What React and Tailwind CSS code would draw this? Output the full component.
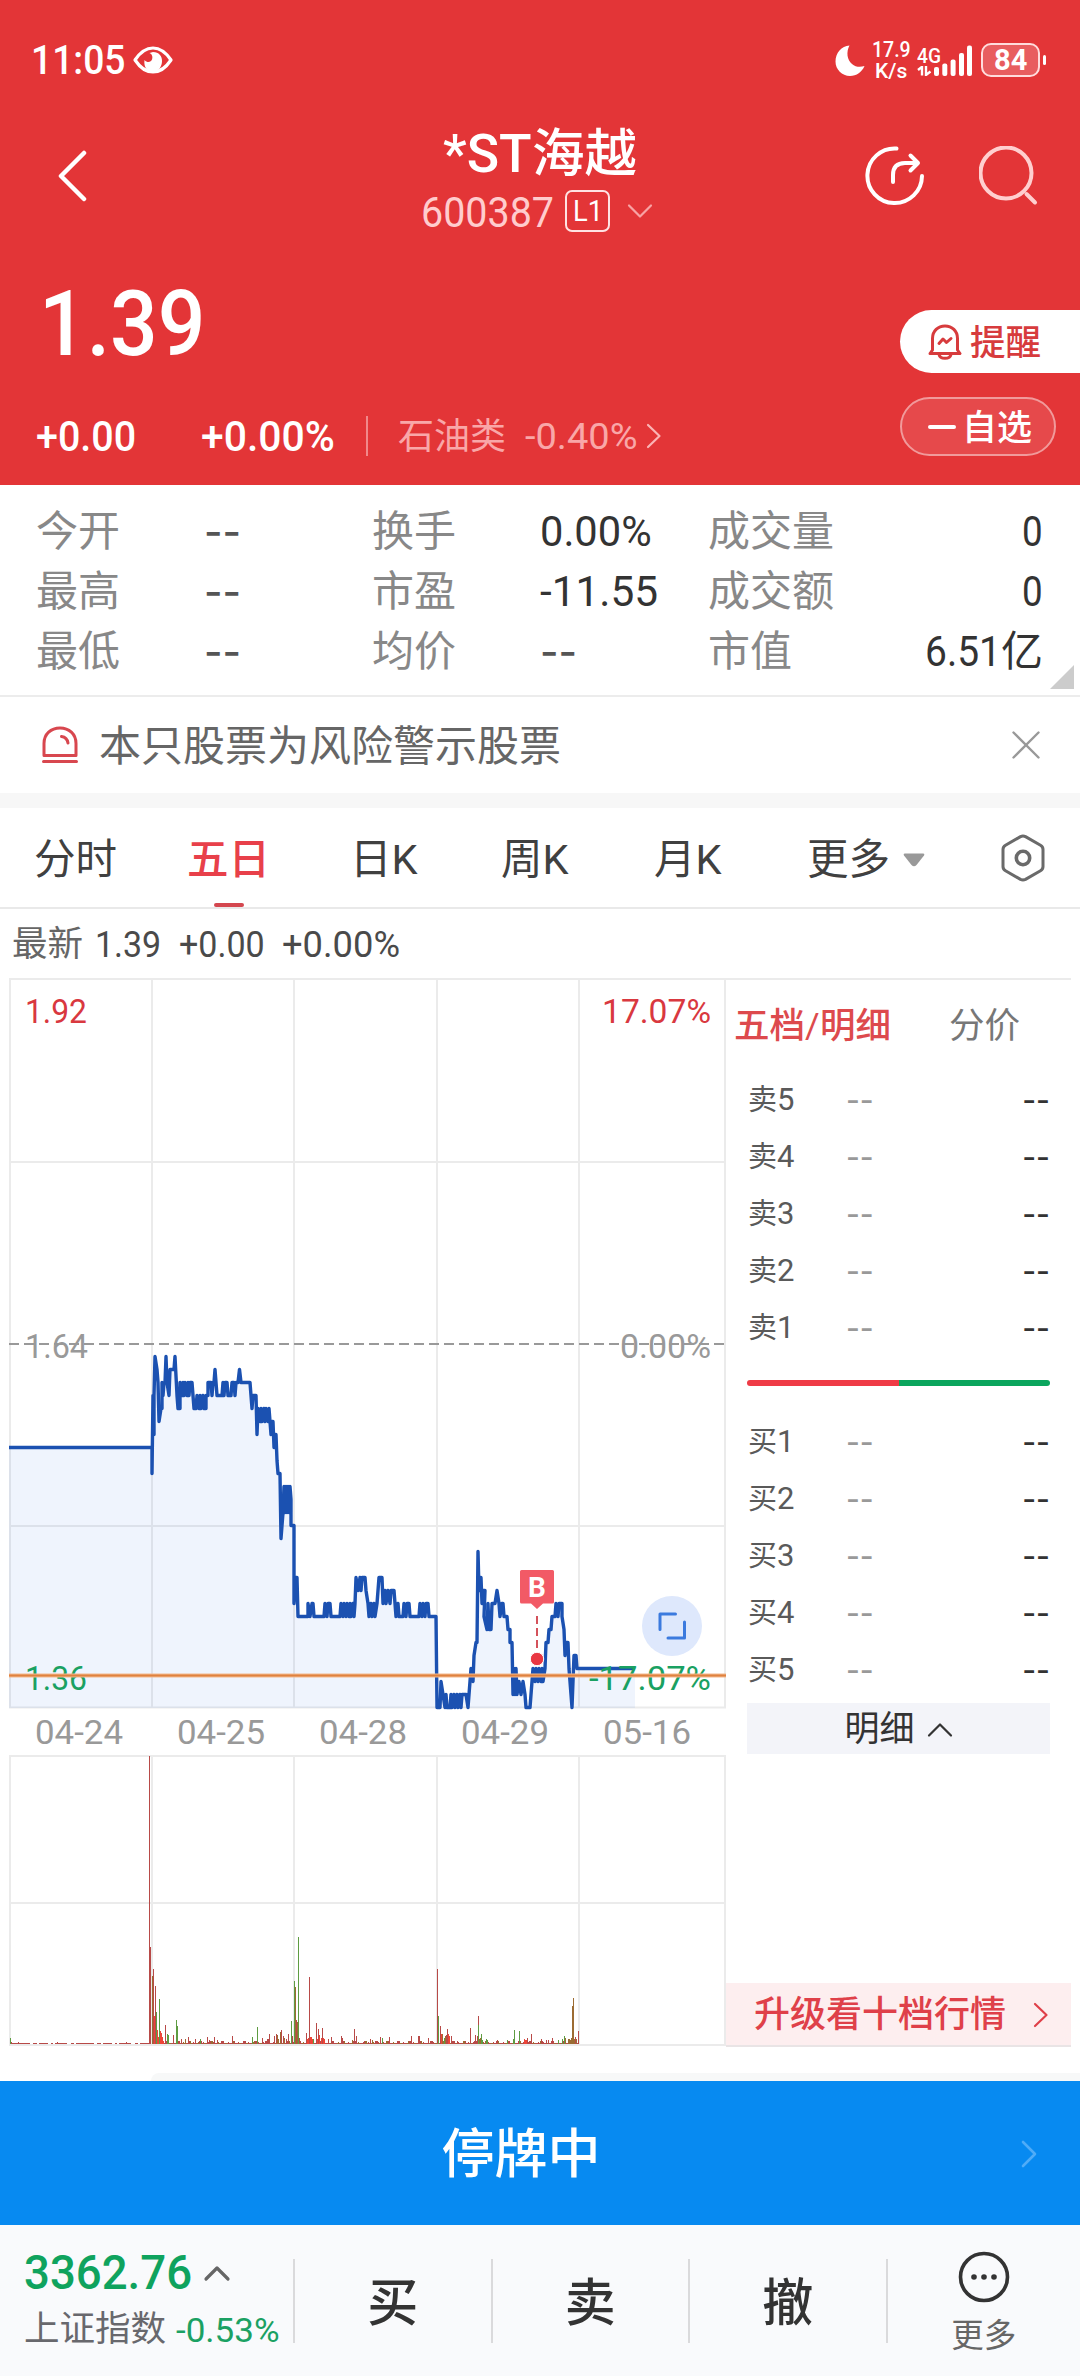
import React, { useLayoutEffect, useRef, useState } from "react";

// Narrow figures: squeezes (or stretches) a run of text to the given width.
const Num = ({ w, children, className = "" }) => {
  const ref = useRef(null);
  const [scale, setScale] = useState(1);

  useLayoutEffect(() => {
    if (ref.current?.offsetWidth) setScale(w / ref.current.offsetWidth);
  }, [w, children]);

  return (
    <span className={`inline-block shrink-0 leading-none ${className}`} style={{ width: w }}>
      <span ref={ref} className="inline-block origin-left whitespace-nowrap" style={{ transform: `scaleX(${scale})` }}>
        {children}
      </span>
    </span>
  );
};

const Chevron = ({ d, w, h, stroke = 3, className = "" }) => (
  <svg width={w} height={h} viewBox={`0 0 ${w} ${h}`} className={`shrink-0 ${className}`} fill="none" stroke="currentColor" strokeWidth={stroke} strokeLinecap="round" strokeLinejoin="round">
    <path d={d} />
  </svg>
);

const stats = [
  ["今开", "--", "换手", "0.00%", 112, "成交量", "0", 21],
  ["最高", "--", "市盈", "-11.55", 118, "成交额", "0", 21],
  ["最低", "--", "均价", "--", 0, "市值", "6.51", 76],
];

const days = ["04-24", "04-25", "04-28", "04-29", "05-16"];
const gridX = [10, 152, 294, 437, 579, 725];

// [x, price in cents]
const priceBlocks = [
  [9, 156], [152, 156], [152, 154], [153, 160], [154, 157], [154, 160], [155, 163], [157, 162], [158, 161], [159, 158], [161, 159], [162, 159],
  [162, 161], [163, 160], [164, 161], [165, 161], [166, 163], [167, 161], [169, 160], [170, 162], [174, 162], [175, 163], [177, 160], [178, 159],
  [180, 159], [180, 161], [182, 160], [183, 161], [184, 160], [185, 161], [187, 160], [188, 161], [189, 160], [190, 161], [192, 161], [193, 160],
  [194, 159], [196, 159], [197, 160], [199, 159], [200, 160], [201, 159], [203, 160], [204, 159], [206, 159], [206, 160], [208, 160], [208, 161],
  [211, 161], [212, 160], [213, 161], [214, 161], [215, 162], [217, 160], [222, 160], [223, 161], [224, 160], [225, 161], [227, 161], [228, 160],
  [231, 160], [232, 161], [234, 161], [235, 160], [236, 161], [238, 161], [239.5, 162], [241, 161], [250, 161], [251, 160], [252, 159], [253, 160],
  [256, 160], [257, 157], [258, 159], [260, 158], [261, 159], [262, 158], [264, 159], [265, 158], [266, 159], [268, 158], [269, 159], [270, 158],
  [271, 157], [272, 158], [273, 158], [274, 156], [275, 157], [276, 157], [277, 155], [278, 154], [280, 154], [281, 149], [283, 151], [284, 153],
  [285, 151], [286, 153], [287, 151], [288, 153], [289, 151], [290, 153], [291, 152], [291, 150], [294, 150], [294, 144], [296, 146], [297, 146],
  [298, 143], [308, 143], [308, 144], [310, 143], [312, 144], [313, 144], [314, 143], [324, 143], [325, 144], [327, 143], [328, 144], [330, 144],
  [331, 143], [340, 143], [341, 144], [343, 143], [344, 144], [346, 143], [347, 144], [349, 143], [350, 144], [351, 143], [353, 144], [354, 143],
  [355, 144], [356, 146], [358, 145], [360, 146], [361, 145], [362, 146], [365, 146], [366, 145], [368, 144], [369, 143], [371, 144], [372, 143],
  [374, 144], [375, 143], [377, 144], [378, 145], [379, 146], [382, 146], [383, 144], [385, 145], [386, 144], [388, 145], [390, 144], [391, 145],
  [394, 145], [396, 143], [398, 144], [399, 143], [403, 143], [404, 144], [406, 143], [407, 144], [409, 144], [410, 143], [419, 143], [420, 144],
  [422, 143], [423, 144], [425, 143], [426, 144], [428, 144], [429, 143], [436, 143], [437, 136], [440, 136], [441, 138], [443, 137], [445, 136],
  [446, 137], [447, 136], [450, 136], [451, 137], [452, 136], [454, 137], [455, 136], [457, 137], [458, 136], [460, 137], [461, 136], [462, 137],
  [466, 137], [468, 136], [469, 137], [471, 139], [473, 138], [474, 140], [476, 141], [477, 141], [478, 148], [479, 145], [480, 146], [481, 146],
  [482, 144], [483, 145], [485, 145], [484, 143], [487, 142], [488, 144], [489, 142], [491, 142], [492, 144], [495, 144], [497, 145], [499, 144],
  [500, 143], [502, 144], [503, 144], [504, 143], [507, 143], [508, 142], [510, 142], [510, 141], [512, 141], [513, 137], [514, 139], [515, 137],
  [516, 139], [517, 137], [519, 138], [521, 137], [523, 138], [525, 137], [526, 136], [530, 136], [532, 138], [533, 139], [535, 138], [536, 139],
  [538, 138], [539, 139], [541, 138], [542, 139], [543, 138], [545, 139], [546, 141], [548, 141], [549, 142], [551, 142], [552, 143], [555, 143],
  [556, 144], [558, 143], [559, 144], [562, 144], [562, 143], [564, 142], [565, 140], [566, 141], [568, 141], [569, 139], [570, 138], [572, 136],
  [573, 138], [574, 140], [576, 140], [577, 139], [635, 139],
];

const TOP = 978;
const priceY = (cents) => 1344 + 13 * (164 - cents) - TOP - 0.5;
const pricePath = priceBlocks.map(([x, p], i) => `${i ? "L" : "M"}${x} ${priceY(p)}`).join("");

const R = "#b84a48";
const F = "#ee4438";
const G = "#5e9c42";
const O = "#9c6c33";

// [x, height, colour]
const volume = [
  [10, 6, G], [11, 2, R], [18, 2, R], [57, 2, R], [126, 2, R], [149, 288, R], [150, 97, R], [152, 68, O], [153, 75, R], [154, 28, F], [155, 58, R],
  [156, 32, G], [157, 14, F], [158, 7, F], [159, 45, G], [160, 13, F], [161, 11, F], [162, 7, F], [163, 3, F], [165, 19, R], [167, 10, G],
  [168, 9, G], [173, 9, R], [176, 24, G], [177, 18, G], [181, 5, R], [185, 5, O], [188, 7, R], [195, 5, R], [200, 5, G], [207, 7, R], [209, 4, R],
  [214, 7, R], [217, 4, R], [232, 8, R], [252, 7, G], [257, 17, G], [262, 6, R], [267, 5, R], [268, 5, R], [269, 10, R], [274, 8, R], [276, 10, R],
  [277, 9, O], [278, 5, O], [280, 12, O], [281, 14, R], [283, 8, R], [284, 6, O], [286, 5, R], [288, 10, R], [291, 23, G], [292, 8, R],
  [294, 63, G], [295, 57, O], [296, 24, R], [297, 22, O], [298, 107, G], [299, 6, R], [306, 11, R], [307, 5, F], [308, 6, F], [309, 67, R],
  [310, 7, F], [311, 7, F], [312, 5, F], [313, 5, G], [316, 21, R], [317, 5, F], [318, 15, R], [319, 9, F], [321, 6, F], [322, 16, R],
  [323, 6, F], [324, 5, F], [328, 5, R], [331, 7, R], [341, 8, R], [342, 6, R], [352, 4, O], [354, 15, R], [356, 8, R], [370, 5, R], [372, 4, O],
  [380, 7, R], [382, 6, G], [389, 7, R], [411, 8, R], [418, 8, R], [419, 8, R], [428, 6, R], [437, 75, R], [438, 28, G], [440, 18, R],
  [441, 10, F], [442, 10, O], [444, 6, G], [445, 8, O], [446, 9, R], [447, 15, R], [448, 10, F], [449, 8, F], [451, 8, R], [457, 3, R],
  [470, 16, R], [475, 9, R], [477, 8, R], [478, 28, R], [479, 5, O], [480, 6, O], [481, 10, G], [482, 4, G], [486, 5, G], [487, 4, G],
  [497, 4, R], [507, 4, G], [513, 5, G], [514, 14, G], [519, 13, G], [524, 5, F], [525, 4, F], [526, 4, F], [527, 6, R], [531, 10, R],
  [541, 5, R], [546, 4, R], [548, 4, R], [552, 6, R], [558, 4, G], [562, 5, G], [564, 8, G], [565, 6, O], [568, 5, O], [569, 5, O], [570, 4, O],
  [571, 6, O], [572, 38, O], [573, 46, O], [574, 5, O], [575, 7, R], [576, 5, O], [578, 13, R],
];

// low-turnover minutes between the listed bars
const quiet = Array.from({ length: 424 }, (_, i) => [154 + i, 1 + ((i * 7919) % 11 > 7 ? 2 : (i * 31) % 5 > 3 ? 1 : 0), (i * 13) % 7 > 4 ? O : R]);

const ChartText = ({ x, y, w, fill, size = 34, children }) => (
  <text x={x} y={y} textLength={w} lengthAdjust="spacingAndGlyphs" fill={fill} fontSize={size} className="font-[450]">
    {children}
  </text>
);

const PriceChart = () => (
  <svg width="717" height="1069" viewBox={`9 0 717 1069`} className="block shrink-0">
    <g stroke="#ebebeb" strokeWidth="2">
      <path d="M9 1H726M9 184H726M9 548H726M9 729.5H726" />
      {gridX.map((x) => (
        <path key={x} d={`M${x} 0V730M${x} 778V1067`} />
      ))}
      <path d="M9 778H726M9 925H726M9 1067H726" />
    </g>
    <path d="M9 366H725" stroke="#999" strokeWidth="2" strokeDasharray="10 5" />
    <path d={`${pricePath}V730H9Z`} fill="#2f6fe4" fillOpacity="0.08" />
    <path d={pricePath} fill="none" stroke="#1b51b1" strokeWidth="3.4" strokeLinejoin="round" />

    <ChartText x={25} y={45} w={62} fill="#d9383f">1.92</ChartText>
    <ChartText x={602} y={45} w={109} fill="#d9383f">17.07%</ChartText>
    <ChartText x={25} y={380} w={63} fill="#999">1.64</ChartText>
    <ChartText x={620} y={380} w={91} fill="#999">0.00%</ChartText>
    <ChartText x={25} y={712} w={62} fill="#1aa162">1.36</ChartText>
    <ChartText x={589} y={712} w={122} fill="#1aa162">-17.07%</ChartText>

    <path d="M9 697.5H726" stroke="#f3b88d" strokeWidth="4" />
    <path d="M9 697.5H726" stroke="#df813f" strokeWidth="2" />

    <path d="M537 638V676" stroke="#d4525b" strokeWidth="2" strokeDasharray="8 4" />
    <circle cx="537" cy="681" r="6.7" fill="#e93742" stroke="#fff" strokeWidth="1" />
    <path d="M521.500 592H552.500Q554 592 554 593.500V624Q554 625.500 552.500 625.500H543L537 631L531 625.500H521.500Q520 625.500 520 624V593.500Q520 592 521.500 592Z" fill="#f25a66" />
    <text x="537" y="619" textAnchor="middle" fill="#fff" fontSize="28" className="font-bold">B</text>

    <circle cx="672" cy="648" r="30" fill="#dee8fc" />
    <path d="M660 651.500V636H675.500M684.500 644V660H668" fill="none" stroke="#3b7ade" strokeWidth="3" strokeLinecap="round" strokeLinejoin="round" />

    {days.map((day, i) => (
      <ChartText key={day} x={35 + i * 142} y={766} w={88} fill="#999">{day}</ChartText>
    ))}

    <path d="M12 1065.500H149" stroke={R} strokeWidth="1" strokeDasharray="18 3 4 2 9 3 2 2 12 4 3 2" />
    <g shapeRendering="crispEdges">
      {quiet.map(([x, h, fill]) => (
        <rect key={x} x={x} y={1066 - h} width="1" height={h} fill={fill} />
      ))}
      {volume.map(([x, h, fill]) => (
        <rect key={x} x={x} y={1066 - h} width="1" height={h} fill={fill} />
      ))}
      <rect x="478" y="1047" width="1" height="19" fill={G} />
    </g>
  </svg>
);

const StatusBar = () => (
  <div className="flex h-[120px] items-center justify-between pr-[34px] pl-[31px] text-white">
    <div className="flex items-center">
      <Num w={94} className="pt-[2px] text-[40px] font-medium">11:05</Num>
      <svg width="42" height="30" viewBox="0 0 42 30" className="ml-[7px]">
        <path d="M3 15Q11 3 21 3T39 15Q31 27 21 27T3 15Z" fill="none" stroke="#fff" strokeWidth="3.200" strokeLinejoin="round" />
        <path d="M21 7C27 7 30 11 30 16C30 21 27 26.500 21 26.500C15 26.500 11.500 22 12.500 15C15 18 19 17.500 20 14.500C21 12 20 9 17.500 8Z" fill="#fff" />
      </svg>
    </div>
    <div className="flex items-center">
      <svg width="30" height="31" viewBox="0 0 30 31">
        <path d="M14.500 0.500C11 7 12 15 17 19C20.500 22 25 22.500 29.500 21C27 27 21.500 31 15 31C7 31 0.500 24.500 0.500 16.500C0.500 8 6.500 1 14.500 0.500Z" fill="#fff" />
      </svg>
      <div className="ml-[6px] flex w-[40px] flex-col items-center font-medium">
        <Num w={39} className="text-[22px] leading-[18px]">17.9</Num>
        <Num w={32} className="text-[21px] leading-[18px]">K/s</Num>
      </div>
      <div className="ml-[6px] flex items-end">
        <div className="flex flex-col">
          <Num w={24} className="text-[20px] font-medium">4G</Num>
          <svg width="15" height="10" viewBox="0 0 15 10" fill="none" stroke="#fff" strokeWidth="2.400">
            <path d="M1 4L5 0.800V9.500M9 0V9L13.500 5.500" />
          </svg>
        </div>
        <svg width="38" height="31" viewBox="0 0 38 31" className="-ml-[7px]" fill="#fff">
          <rect x="0" y="22" width="5" height="9" rx="2" />
          <rect x="8.300" y="18.500" width="5" height="12.500" rx="2" />
          <rect x="16.600" y="14.500" width="5" height="16.500" rx="2" />
          <rect x="25" y="8" width="5" height="23" rx="2" />
          <rect x="33" y="0.500" width="5" height="30.500" rx="2" />
        </svg>
      </div>
      <div className="ml-[9px] flex h-[34px] w-[59px] items-center justify-center rounded-[10px] border-[2.5px] border-[#ffdcdc] bg-white/20">
        <Num w={33} className="text-[29px] font-bold">84</Num>
      </div>
      <div className="ml-[3px] h-[10px] w-[3px] rounded-full bg-white" />
    </div>
  </div>
);

const Header = () => (
  <header className="h-[485px] bg-[#e33537]">
    <StatusBar />
    <div className="flex h-[122px]">
      <div className="flex h-[112px] w-[421px] items-center pl-[56px] text-white">
        <Chevron w={32} h={52} d="M28 3L5 26L28 49" stroke={4.5} />
      </div>
      <div className="flex flex-col">
        <div className="flex h-[60px] items-center pt-[8px] pl-[22px] text-white">
          <Num w={89} className="text-[54px] font-medium">*ST</Num>
          <span className="text-[52.5px] leading-none font-medium">海越</span>
        </div>
        <div className="flex h-[62px] items-center">
          <Num w={133} className="pt-[2px] text-[43px] text-[#ffcccd]">600387</Num>
          <span className="ml-[11px] flex h-[42px] w-[45px] items-center justify-center rounded-[7px] border-2 border-[#ffe2e2] text-white">
            <Num w={30} className="text-[30px]">L1</Num>
          </span>
          <Chevron w={26} h={16} d="M2 2.500L13 13.500L24 2.500" stroke={2.2} className="ml-[17px] text-[#f8a3a4]" />
        </div>
      </div>
      <div className="flex h-[112px] flex-1 items-center justify-end pr-[41px]">
        <svg width="60" height="60" viewBox="864 146 60 60" fill="none" stroke="#fff" strokeWidth="4" strokeLinecap="round" strokeLinejoin="round">
          <path d="M895.500 148.500A27.300 27.300 0 1 0 921 176" />
          <path d="M892 182V175Q892 163 904 163H917M909.500 155.500L917 163L909.500 170.500" />
        </svg>
        <svg width="60" height="60" viewBox="978 146 60 60" fill="none" stroke="#ffcfcf" strokeWidth="4" strokeLinecap="round" className="ml-[54px]">
          <circle cx="1005" cy="173" r="25.500" />
          <path d="M1025.500 194L1034 202.500" />
        </svg>
      </div>
    </div>
    <div className="flex h-[243px] justify-between">
      <div>
        <div className="flex h-[166px] items-center pl-[39px] text-white">
          <Num w={166} className="text-[90px] font-medium">1.39</Num>
        </div>
        <div className="flex h-[56px] items-center pl-[36px] text-white">
          <Num w={100} className="text-[43px] font-medium">+0.00</Num>
          <Num w={134} className="ml-[65px] text-[43px] font-medium">+0.00%</Num>
          <span className="ml-[31px] h-[40px] w-[2px] bg-[#f1898a]" />
          <span className="ml-[30px] pt-px text-[36px] leading-none text-[#f9a7a8]">石油类</span>
          <Num w={112} className="ml-[19px] text-[37px] text-[#f9a7a8]">-0.40%</Num>
          <Chevron w={16} h={26} d="M2 2L13.500 13L2 24" stroke={2.2} className="ml-[9px] text-[#fbb4b5]" />
        </div>
      </div>
      <div className="flex w-[180px] flex-col pt-[68px]">
        <div className="flex h-[63px] items-center rounded-l-full bg-white pl-[28px] text-[#d73b3d]">
          <svg width="34" height="36" viewBox="0 0 34 36" fill="none" stroke="currentColor" strokeWidth="3" strokeLinecap="round" strokeLinejoin="round">
            <path d="M4.500 26V14.500C4.500 7 10 2 17 2S29.500 7 29.500 14.500V26L32 29.500H2L4.500 26Z" />
            <path d="M11 30.500C12 35.500 22 35.500 23 30.500M11 19.500L15 15L18.500 18.500L23 14.500" />
          </svg>
          <span className="ml-[8px] pt-[4px] text-[35.5px] leading-none font-medium">提醒</span>
        </div>
        <div className="mt-[24px] flex h-[59px] w-[156px] items-center rounded-full border-2 border-[#f19a9b] bg-white/10 pl-[26px] text-white">
          <span className="h-[4px] w-[28px] rounded-full bg-white" />
          <span className="ml-[6px] pt-[3px] text-[35px] leading-none font-medium">自选</span>
        </div>
      </div>
    </div>
  </header>
);

const Dashes = ({ className = "" }) => <span className={`font-['Inter'] leading-none font-medium ${className}`}>--</span>;

const Stats = () => (
  <section className="relative h-[210px] bg-white pt-[17px]">
    {stats.map(([a, , b, bv, bw, c, cv, cw]) => (
      <div key={a} className="flex h-[60px] items-center pr-[37px] pl-[36px] text-[42px] text-[#888]">
        <span className="w-[168px] leading-none">{a}</span>
        <Dashes className="w-[168px] text-[40px] text-[#555]" />
        <span className="w-[168px] leading-none">{b}</span>
        <span className="flex w-[168px] text-[#333]">
          {bw ? <Num w={bw} className="font-[450]">{bv}</Num> : <Dashes className="text-[40px] text-[#555]" />}
        </span>
        <span className="leading-none">{c}</span>
        <span className="flex flex-1 items-center justify-end text-[#333]">
          <Num w={cw} className="font-[450]">{cv}</Num>
          {c === "市值" && <span className="leading-none">亿</span>}
        </span>
      </div>
    ))}
    <svg width="24" height="24" viewBox="0 0 24 24" className="absolute right-[6px] bottom-[6px]">
      <path d="M24 0V24H0Z" fill="#ccc" />
    </svg>
  </section>
);

const Alert = () => (
  <section className="flex h-[98px] items-center justify-between border-t-2 border-[#ececec] pr-[39px] pl-[41px]">
    <div className="flex items-center">
      <svg width="38" height="40" viewBox="0 0 38 40" fill="none" stroke="#d8474f" strokeWidth="3" strokeLinecap="round" strokeLinejoin="round">
        <path d="M3 30.500V18.500C3 9 10 3 19 3S35 9 35 18.500V30.500ZM2.500 36.500H35.500M20.500 11.500C24 12 26.500 14.500 27 18" />
      </svg>
      <span className="ml-[20px] pt-[4px] text-[42px] leading-none text-[#666]">本只股票为风险警示股票</span>
    </div>
    <Chevron w={30} h={30} d="M2.500 2.500L27.500 27.500M27.500 2.500L2.500 27.500" stroke={2.4} className="text-[#999]" />
  </section>
);

const Tabs = () => (
  <nav className="flex h-[101px] items-center border-b-2 border-[#e9e9e9] pl-[34px] text-[41.5px] leading-none text-[#404040]">
    <span className="w-[153px] pt-[5px]">分时</span>
    <span className="relative flex h-full w-[163px] items-center pt-[5px] font-[450] text-[#e8404a]">
      五日
      <i className="absolute bottom-0 left-[27px] h-[4px] w-[30px] rounded-full bg-[#d4474f]" />
    </span>
    <span className="w-[151px] pt-[5px]">日<Num w={26} className="font-[450]">K</Num></span>
    <span className="w-[153px] pt-[5px]">周<Num w={26} className="font-[450]">K</Num></span>
    <span className="w-[153px] pt-[5px]">月<Num w={26} className="font-[450]">K</Num></span>
    <span className="flex w-[194px] items-center pt-[5px]">
      更多
      <svg width="22" height="14" viewBox="0 0 22 14" className="ml-[13px]">
        <path d="M2 0.500H20Q22 0.500 21 2.500L13.500 12Q11 14.500 8.500 12L1 2.500Q0 0.500 2 0.500Z" fill="#999" />
      </svg>
    </span>
    <svg width="44" height="48" viewBox="0 0 44 48" fill="none" stroke="#6a6a6a" strokeWidth="3" strokeLinejoin="round">
      <path d="M19.500 2.600Q22 1.300 24.500 2.600L39.500 11.300Q42 12.800 42 15.500V32.500Q42 35.200 39.500 36.700L24.500 45.400Q22 46.700 19.500 45.400L4.500 36.700Q2 35.200 2 32.500V15.500Q2 12.800 4.500 11.300Z" />
      <circle cx="22" cy="24" r="6.700" strokeWidth="3.600" />
    </svg>
  </nav>
);

const BookRow = ({ side, level }) => (
  <div className="flex h-[57px] items-center pl-px text-[29px] leading-none text-[#5a5a5a]">
    <span className="w-[98px]">{side}<Num w={17} className="text-[31px]">{level}</Num></span>
    <Dashes className="text-[30px] text-[#999]" />
    <span className="flex-1" />
    <Dashes className="text-[30px] text-[#333]" />
  </div>
);

const OrderBook = () => (
  <aside className="flex h-[1069px] w-[345px] flex-col border-t-2 border-[#ebebeb]">
    <div className="flex h-[90px] items-center pt-[3px] pl-[8px] text-[35.5px] leading-none">
      <span className="w-[215px] font-[450] text-[#dd4a4d]">五档<Num w={15}>/</Num>明细</span>
      <span className="text-[#777]">分价</span>
    </div>
    <div className="mt-px pr-[21px] pl-[21px]">
      {[5, 4, 3, 2, 1].map((n) => (
        <BookRow key={n} side="卖" level={n} />
      ))}
      <div className="mt-[24px] mb-[27px] flex h-[6px] overflow-hidden rounded-full">
        <span className="w-1/2 bg-[#ef3b46]" />
        <span className="w-1/2 bg-[#0ba55d]" />
      </div>
      {[1, 2, 3, 4, 5].map((n) => (
        <BookRow key={n} side="买" level={n} />
      ))}
      <div className="mt-[5px] flex h-[51px] items-center justify-center bg-[#f3f4f9] pt-[2px] text-[35px] leading-none text-[#333]">
        明细
        <Chevron w={26} h={16} d="M2 13.500L13 2.500L24 13.500" stroke={2.2} className="ml-[12px]" />
      </div>
    </div>
    <div className="mt-auto flex h-[64px] items-center justify-between border-b-2 border-[#e9e4e5] bg-[#fdeeef] pt-[2px] pr-[22px] pl-[28px] text-[36px] leading-none font-[450] text-[#df4049]">
      升级看十档行情
      <Chevron w={16} h={26} d="M2 2L13.500 13L2 24" stroke={2.2} />
    </div>
  </aside>
);

const TradeBar = () => (
  <footer className="flex h-[151px] bg-[#f9fafc] text-[#333]">
    <div className="w-[293px] pt-[19px] pl-[24px]">
      <div className="flex h-[58px] items-center text-[#0fa35e]">
        <Num w={168} className="text-[48px] font-medium">3362.76</Num>
        <Chevron w={28} h={18} d="M3 15L14 4L25 15" stroke={3.2} className="ml-[11px] text-[#666]" />
      </div>
      <div className="flex h-[54px] items-center">
        <span className="pt-[2px] text-[35.5px] leading-none text-[#68686d]">上证指数</span>
        <Num w={104} className="ml-[10px] pt-[2px] text-[34px] font-[450] text-[#1ba163]">-0.53%</Num>
      </div>
    </div>
    {["买", "卖", "撤"].map((label) => (
      <div key={label} className="mt-[34px] flex h-[84px] w-[197.5px] items-center justify-center border-l-2 border-[#dadadc] pt-[5px] text-[51px] leading-none font-medium">
        {label}
      </div>
    ))}
    <div className="mt-[34px] flex h-[84px] flex-1 justify-center border-l-2 border-[#dadadc]">
      <div className="-mt-[8px] flex flex-col items-center">
        <svg width="52" height="52" viewBox="0 0 52 52" className="shrink-0">
          <circle cx="26" cy="26" r="23.500" fill="none" stroke="#333" strokeWidth="3.600" />
          <circle cx="16" cy="26" r="2.800" fill="#333" />
          <circle cx="26" cy="26" r="2.800" fill="#333" />
          <circle cx="36" cy="26" r="2.800" fill="#333" />
        </svg>
        <span className="mt-[17px] text-[32.5px] leading-none text-[#666]">更多</span>
      </div>
    </div>
  </footer>
);

export default function App() {
  return (
    <div className="h-[2376px] w-[1080px] overflow-hidden bg-white font-['Roboto','Noto_Sans_CJK_SC',sans-serif]">
      <Header />
      <Stats />
      <Alert />
      <div className="h-[15px] bg-[#f7f7f7]" />
      <Tabs />
      <div className="flex h-[69px] items-center pt-[2px] pl-[12px] text-[#4a4a4a]">
        <span className="pt-px text-[35.5px] leading-none text-[#666]">最新</span>
        <Num w={66} className="ml-[12px] text-[36px]">1.39</Num>
        <Num w={86} className="ml-[18px] text-[36px]">+0.00</Num>
        <Num w={118} className="ml-[17px] text-[36px]">+0.00%</Num>
      </div>
      <main className="flex pl-[9px]">
        <PriceChart />
        <OrderBook />
      </main>
      <div className="flex h-[34px] items-end justify-end">
        <div className="h-[8px] w-[929px] rounded-tl-[8px] bg-[#f7f8f8]" />
      </div>
      <div className="relative flex h-[144px] items-center justify-center bg-[#078af1] pt-[5px] pr-[38px] text-[53px] leading-none font-medium text-white">
        停牌中
        <Chevron w={20} h={30} d="M3 3L15 15L3 27" stroke={2.6} className="absolute top-[58px] right-[40px] text-[#4facf8]" />
      </div>
      <TradeBar />
    </div>
  );
}
